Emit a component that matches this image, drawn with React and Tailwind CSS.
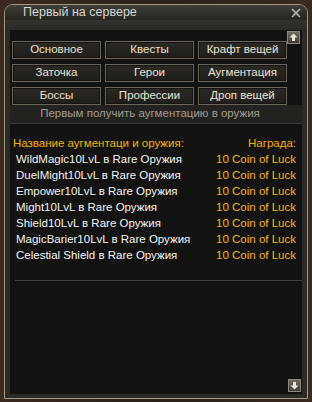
import React from 'react';

const tabs = [
    'Основное', 'Квесты', 'Крафт вещей',
    'Заточка', 'Герои', 'Аугментация',
    'Боссы', 'Профессии', 'Дроп вещей',
];

const rewards = [
    { name: 'WildMagic10LvL в Rare Оружия', prize: '10 Coin of Luck' },
    { name: 'DuelMight10LvL в Rare Оружия', prize: '10 Coin of Luck' },
    { name: 'Empower10LvL в Rare Оружия', prize: '10 Coin of Luck' },
    { name: 'Might10LvL в Rare Оружия', prize: '10 Coin of Luck' },
    { name: 'Shield10LvL в Rare Оружия', prize: '10 Coin of Luck' },
    { name: 'MagicBarier10LvL в Rare Оружия', prize: '10 Coin of Luck' },
    { name: 'Celestial Shield в Rare Оружия', prize: '10 Coin of Luck' },
];

const ScrollButton = ({ down }) => (
    <div className="w-[13px] h-[13px] bg-gradient-to-b from-[#6e6a62] to-[#3e3b36] border border-[#8c877c] flex items-center justify-center">
        <svg width="9" height="9" viewBox="0 0 9 9" className={down ? 'rotate-180' : ''}>
            <path d="M4.5 0.5 L8.5 4.5 L6 4.5 L6 8 L3 8 L3 4.5 L0.5 4.5 Z" fill="#e8e4d8" />
        </svg>
    </div>
);

const App = () => {
    return (
        <div className="w-[312px] h-[402px] bg-gradient-to-r from-[#3b2a1e] via-[#2a211a] to-[#3a2a1f] pt-[4px] px-[4px] pb-[3px] font-['Liberation_Sans',Arial,sans-serif] text-[11px] leading-none">
            <div className="h-full flex flex-col border border-[#a39a84] rounded-t-[9px] bg-[#2b2a27] overflow-hidden">
                {/* title bar */}
                <div className="h-[15px] flex items-center justify-between pl-[18px] pr-[6px] bg-gradient-to-b from-[#3f3e38] to-[#25241f]">
                    <span className="text-[12.5px] text-[#d6d6d2]">Первый на сервере</span>
                    <svg width="10" height="10" viewBox="0 0 10 10">
                        <path d="M1 1 L9 9 M9 1 L1 9" stroke="#bdb8ae" strokeWidth="1.6" />
                    </svg>
                </div>
                <div className="h-[10px] bg-gradient-to-b from-[#34322e] to-[#2b2926]" />

                {/* body */}
                <div className="flex-1 mx-[5px] mb-[4px] bg-[#121211] relative">
                    <div className="absolute right-[2px] top-[1px]"><ScrollButton /></div>
                    <div className="absolute right-[1px] bottom-[2px]"><ScrollButton down /></div>

                    <div className="pl-[2px] pr-[15px] pt-[11px] grid grid-cols-3 gap-x-[4px] gap-y-[5px]">
                        {tabs.map((t) => (
                            <div
                                key={t}
                                className="h-[18px] flex items-center justify-center bg-gradient-to-b from-[#2c2924] to-[#1f1d1a] border border-[#6a6459] shadow-[inset_0_0_0_1px_#141311] text-[#ebe4d2] text-[11.5px]"
                            >
                                {t}
                            </div>
                        ))}
                    </div>

                    <div className="h-[19px] bg-[#24221f] border-b border-[#3b3732] flex justify-center pt-[3px] pr-[12px] text-[#a39d93] text-[11.5px]">
                        Первым получить аугментацию в оружия
                    </div>

                    <div className="pt-[12px] pl-[3px] pr-[6px]">
                        <div className="h-[16px] flex items-center justify-between text-[#f2b000] text-[11.5px]">
                            <span>Название аугментаци и оружия:</span>
                            <span>Награда:</span>
                        </div>
                        {rewards.map((r) => (
                            <div key={r.name} className="h-[16px] flex items-center justify-between text-[11.5px]">
                                <span className="pl-[3px] text-[#f2f2f0]">{r.name}</span>
                                <span className="text-[#f5b800]">{r.prize}</span>
                            </div>
                        ))}
                        <div className="mt-[16px] ml-[2px] mr-[-6px] h-px bg-[#45423d]" />
                    </div>
                </div>
            </div>
        </div>
    );
};

export default App;
